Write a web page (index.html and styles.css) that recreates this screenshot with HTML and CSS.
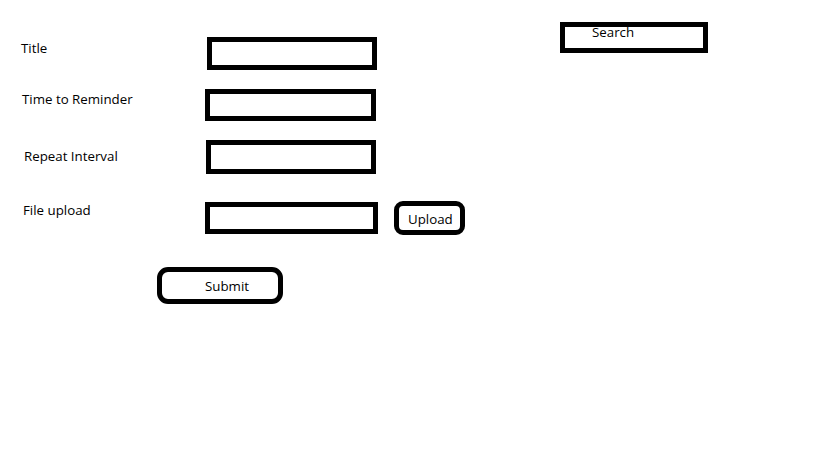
FILE: index.html
```html
<!DOCTYPE html>
<html>
<head>
<meta charset="utf-8">
<link rel="stylesheet" href="styles.css">
</head>
<body>
<div class="page">
  <form class="form">
    <div class="row row-title">
      <label class="label">Title</label>
      <div class="field"></div>
    </div>
    <div class="row row-time">
      <label class="label">Time to Reminder</label>
      <div class="field"></div>
    </div>
    <div class="row row-repeat">
      <label class="label">Repeat Interval</label>
      <div class="field"></div>
    </div>
    <div class="row row-file">
      <label class="label">File upload</label>
      <div class="field"></div>
      <button type="button" class="btn btn-upload">Upload</button>
    </div>
    <button type="button" class="btn btn-submit">Submit</button>
  </form>
  <div class="search">Search</div>
</div>
</body>
</html>
```
FILE: styles.css
```css
html, body {
  margin: 0;
  padding: 0;
  background: #fff;
}
body {
  font-family: "Open Sans", "Liberation Sans", sans-serif;
  font-size: 13.3px;
  line-height: 18px;
  color: #000;
}
.page {
  display: flex;
  align-items: flex-start;
  width: 819px;
  height: 460px;
}
.form {
  width: 560px;
  margin: 0;
  padding-top: 37px;
  display: flex;
  flex-direction: column;
  align-items: flex-start;
}
.row {
  display: flex;
  align-items: flex-start;
}
.label {
  box-sizing: border-box;
  display: block;
}
.field {
  box-sizing: border-box;
  border: 5px solid #000;
  background: #fff;
}
.row-title .label { width: 207px; padding-left: 21px; padding-top: 2px; }
.row-title .field { width: 170px; height: 33px; }

.row-time { margin-top: 19px; }
.row-time .label { width: 205px; padding-left: 22px; padding-top: 1px; }
.row-time .field { width: 171px; height: 32px; }

.row-repeat { margin-top: 19px; }
.row-repeat .label { width: 206px; padding-left: 24px; padding-top: 7px; }
.row-repeat .field { width: 170px; height: 34px; }

.row-file { margin-top: 28px; }
.row-file .label { width: 205px; padding-left: 23px; margin-top: -1px; }
.row-file .field { width: 173px; height: 32px; }

.btn {
  box-sizing: border-box;
  border: 5px solid #000;
  background: #fff;
  font: inherit;
  color: #000;
  padding: 0;
  text-align: left;
  cursor: pointer;
}
.btn-upload {
  margin-left: 16px;
  margin-top: -1px;
  width: 71px;
  height: 34px;
  border-radius: 9px;
  padding-left: 9px;
  padding-top: 1px;
}
.btn-submit {
  margin-top: 32px;
  margin-left: 157px;
  width: 126px;
  height: 37px;
  border-radius: 11px;
  padding-left: 43px;
}
.search {
  box-sizing: border-box;
  margin-top: 22px;
  width: 148px;
  height: 31px;
  border: 5px solid #000;
  padding-left: 27px;
  line-height: 11px;
}
```
